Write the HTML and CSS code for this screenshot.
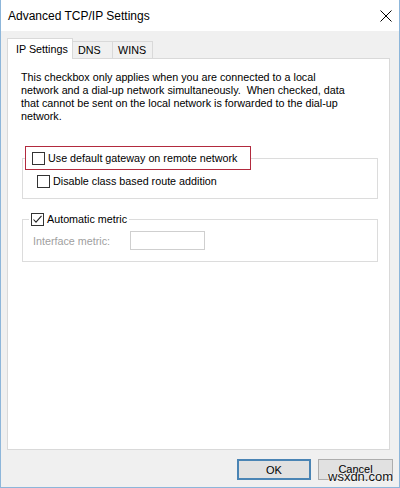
FILE: index.html
```html
<!DOCTYPE html>
<html>
<head>
	<meta charset="utf-8">
	<meta name="viewport" content="width=device-width, initial-scale=1">
	<title>Advanced TCP/IP Settings</title>
	<link rel="stylesheet" href="styles.css">
</head>
<body>
	<div class="window">
		<div class="title_bar">
			<span class="title">Advanced TCP/IP Settings</span>
			<svg class="close" width="12" height="12" viewBox="0 0 12 12">
				<path d="M0.5 0.5 L11.5 11.5 M11.5 0.5 L0.5 11.5" stroke="#000" stroke-width="1" fill="none"/>
			</svg>
		</div>
		<div class="content">
			<div class="tabs">
				<div class="tab active">IP Settings</div>
				<div class="tab">DNS</div>
				<div class="tab">WINS</div>
			</div>
			<div class="panel">
				<p class="note">This checkbox only applies when you are connected to a local<br>network and a dial-up network simultaneously.&nbsp; When checked, data<br>that cannot be sent on the local network is forwarded to the dial-up<br>network.</p>

				<fieldset class="group group_gateway">
					<legend class="marked">
						<label class="check"><span class="box"></span>Use default gateway on remote network</label>
					</legend>
					<label class="check inner"><span class="box"></span>Disable class based route addition</label>
				</fieldset>

				<fieldset class="group group_metric">
					<legend>
						<label class="check">
							<span class="box">
								<svg width="11" height="11" viewBox="0 0 11 11"><path d="M1.5 5.5 L4 8.2 L9.5 1.8" stroke="#222" stroke-width="1.1" fill="none"/></svg>
							</span>Automatic metric
						</label>
					</legend>
					<div class="metric_row">
						<span class="disabled">Interface metric:</span>
						<span class="field"></span>
					</div>
				</fieldset>
			</div>
			<div class="buttons">
				<button type="button" class="btn default">OK</button>
				<button type="button" class="btn">Cancel</button>
			</div>
		</div>
		<span class="watermark">wsxdn.com</span>
	</div>
</body>
</html>
```

FILE: styles.css
```css
* {
	box-sizing: border-box;
}

body {
	margin: 0;
	font-family: "Liberation Sans", Arial, sans-serif;
	font-size: 10.75px;
	color: #000;
}

.window {
	position: relative;
	width: 400px;
	height: 488px;
	background-color: #f0f0f0;
	border: 1px solid #8db6da;
	border-top: none;
}

.title_bar {
	height: 31px;
	display: flex;
	align-items: center;
	justify-content: space-between;
	padding: 0 7px;
	background-color: #fff;
}

.title {
	font-size: 12px;
}

.content {
	padding: 7px 6px 0 6px;
}

/* tabs */
.tabs {
	position: relative;
	z-index: 1;
	display: flex;
	align-items: flex-end;
	height: 21px;
	margin-bottom: -1px;
}

.tab {
	width: 40px;
	height: 17px;
	line-height: 16px;
	margin-bottom: 1px;
	padding-left: 5px;
	border: 1px solid #d9d9d9;
	border-left: none;
	border-bottom: none;
	background-color: #f0f0f0;
}

.tab.active {
	width: 66px;
	height: 21px;
	line-height: 20px;
	margin-bottom: 0;
	padding-left: 8px;
	border-left: 1px solid #d9d9d9;
	background-color: #fff;
}

.panel {
	height: 392px;
	margin-right: 3px;
	padding: 12px 0 0 13px;
	background-color: #fff;
	border: 1px solid #d9d9d9;
}

.note {
	margin: 0;
	line-height: 13px;
}

/* group boxes */
.group {
	width: 356px;
	margin: 23px 0 0 1px;
	padding: 0 0 10px 0;
	border: 1px solid #dcdcdc;
}

.group legend {
	margin-left: 6px;
	padding: 0 2px;
}

.group_gateway legend.marked {
	margin-left: 2px;
	padding: 5px 13px 4px 6px;
	border: 1px solid #b22a3e;
}

.group_metric {
	margin-top: 14px;
	padding-bottom: 11px;
}

.check {
	display: flex;
	align-items: center;
	line-height: 13px;
}

.check.inner {
	margin: 5px 0 0 14px;
}

.box {
	display: inline-flex;
	align-items: center;
	justify-content: center;
	width: 13px;
	height: 13px;
	margin-right: 3px;
	border: 1px solid #333;
	background-color: #fff;
}

.metric_row {
	display: flex;
	align-items: center;
	margin: 5px 0 0 10px;
}

.disabled {
	width: 97px;
	color: #a0a0a0;
}

.field {
	width: 75px;
	height: 19px;
	border: 1px solid #cfcfcf;
	background-color: #fff;
}

/* buttons */
.buttons {
	display: flex;
	justify-content: flex-end;
	gap: 7px;
	margin-top: 9px;
}

.btn {
	width: 75px;
	height: 21px;
	padding: 0 0 2px;
	font-family: "Liberation Sans", Arial, sans-serif;
	font-size: 11px;
	color: #000;
	background-color: #e1e1e1;
	border: 1px solid #adadad;
}

.btn.default {
	width: 74px;
	padding: 0;
	border: 2px solid #4a84b4;
}

.watermark {
	position: absolute;
	left: 327px;
	top: 469px;
	font-size: 13px;
	color: #111;
	text-shadow: 0 0 2px #fff, 0 0 2px #fff;
}
```
